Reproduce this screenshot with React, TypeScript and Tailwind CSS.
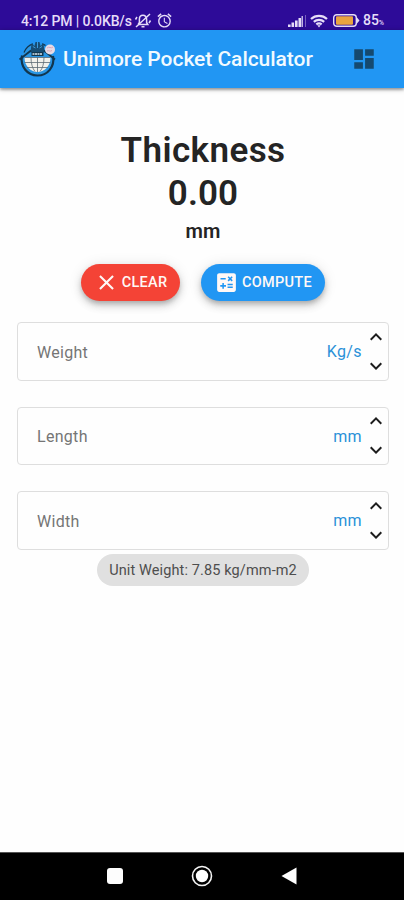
import { useState } from "react";
import {
  MdAlarm,
  MdCalculate,
  MdClose,
  MdDashboard,
  MdKeyboardArrowDown,
  MdKeyboardArrowUp,
} from "react-icons/md";

const FIELDS = [
  { label: "Weight", unit: "Kg/s" },
  { label: "Length", unit: "mm" },
  { label: "Width", unit: "mm" },
];

function StatusBar() {
  return (
    <div className="flex h-[30px] items-center bg-[#2d0b98] pl-[21px] pr-5 pt-[11px] text-[#e6ddf8]">
      <span className="w-[111px] whitespace-nowrap text-[14px] font-medium leading-5 tracking-[-0.12px]">
        4:12 PM | 0.0KB/s
      </span>
      <svg className="ml-[2px] h-[17px] w-[18px]" viewBox="0 0 18 17" fill="none" stroke="currentColor" strokeWidth="1.5">
        <path d="M4.5 12.5h9.3l-1.200-2V7.200C12.600 4.900 11 3.300 9 3.300S5.400 4.900 5.400 7.200v3.300l-1.200 2" />
        <path d="M7.500 14.800h3M2 15 16 2M1.500 7.500 3 5M16.500 8.500 15 11" />
      </svg>
      <MdAlarm className="ml-1 size-[17px]" />
      <div className="flex-1" />
      <svg className="h-3 w-[18px]" viewBox="0 0 18 12" fill="currentColor">
        <path d="M0 9.500h2.600V12H0zM3.500 7.500h2.600V12H3.500zM7 5.500h2.600V12H7zM10.500 3h2.600v9h-2.600z" />
        <path d="M13.600 1h1.200v11h-1.200z" />
        <path d="M17 0h.8v12H17z" opacity=".5" />
      </svg>
      <svg className="ml-1 h-[14px] w-[18px]" viewBox="0 0 18 14" fill="none" stroke="currentColor" strokeWidth="2.200">
        <path d="M1 5c4.500-4.200 11.500-4.200 16 0M3.800 7.900c3-2.600 7.400-2.600 10.400 0M6.300 10.400c1.700-1.300 3.700-1.300 5.400 0" />
        <path d="M7.300 11.300 9 13.600l1.700-2.300z" fill="currentColor" stroke="none" />
      </svg>
      <svg className="ml-[5px] h-[13px] w-[27px]" viewBox="0 0 27 13">
        <rect x=".7" y=".7" width="22.600" height="11.600" rx="3" fill="none" stroke="currentColor" strokeWidth="1.400" />
        <rect x="3" y="2.200" width="17" height="8.600" rx="1" fill="#e9a340" />
        <path d="M24 3.500 26.500 6.500 24 9.500z" fill="currentColor" />
      </svg>
      <span className="ml-[3px] flex items-baseline pt-[2px] text-[14px] font-medium leading-5">
        85<span className="text-[7px]">%</span>
      </span>
    </div>
  );
}

function Logo() {
  return (
    <svg className="size-10" viewBox="0 0 40 40">
      <circle cx="19.500" cy="20.500" r="16" fill="#2a96e4" />
      <path d="M4 16.500C2 28 9.500 36.500 19.500 36.500S37 28 35 17" fill="none" stroke="#12364f" strokeWidth="2.200" />
      <path d="M6 13.500C8 8.500 11.500 5.800 15 4.800M24 4.800c1.500.4 2.500.9 3.500 1.700" fill="none" stroke="#12364f" strokeWidth="1.200" />
      <path d="M12.500 13.500 13.500 4.500l3 2.500 1-4h4l1 4 3-2.500 1 9z" fill="#174d73" />
      <path d="M14.800 7.500 17.500 9M24 7.500 21.500 9M19.500 3v6" stroke="#3d9bdb" strokeWidth="1" />
      <path d="M1.500 20.500 13 11.500M26 11.500l11 9" stroke="#12364f" strokeWidth="1.800" />
      <path d="M6.500 18.500h26c0 8-5.500 14.500-13 14.500s-13-6.500-13-14.500z" fill="#f3f1eb" />
      <path
        d="M6.500 23.500h26M9 28.500h21M19.500 18v15M13 18.500c0 6 1.500 11 4 14M26 18.500c0 6-1.500 11-4 14M6.500 18.500h26"
        fill="none"
        stroke="#5d6b73"
        strokeWidth=".8"
      />
      <path d="M13.500 13h12v4h-12z" fill="#12364f" />
      <path d="M14.500 15h10" stroke="#dce8ef" strokeWidth="1.600" strokeDasharray="2 .5" />
      <circle cx="32" cy="10.500" r="5" fill="#e6dce6" />
      <path d="M29 9c2-2 4 1 6-1M29 12c2-1 3 1 5-.5" fill="none" stroke="#dfa6b8" strokeWidth="1" />
    </svg>
  );
}

function AppHeader() {
  return (
    <header className="flex h-[58px] items-center bg-[#2196f3] pl-[18px] pr-[27px] shadow-[0_1px_5px_rgba(0,0,0,0.35),0_2px_2px_rgba(0,0,0,0.2)]">
      <Logo />
      <h1 className="ml-[5px] flex-1 whitespace-nowrap pt-px text-[21px] font-medium tracking-[-0.04px] text-[#f2faff]">
        Unimore Pocket Calculator
      </h1>
      <button aria-label="Dashboard">
        <MdDashboard className="size-[26px] text-[#15496f]" />
      </button>
    </header>
  );
}

function NumberField({ label, unit }: { label: string; unit: string }) {
  const [value, setValue] = useState("");

  function step(amount: number) {
    setValue(String(Number(value || 0) + amount));
  }

  return (
    <div className="flex h-[58.5px] items-center rounded-[4px] border-[1.5px] border-[#dedede] pl-[19px]">
      <input
        value={value}
        onChange={(e) => setValue(e.target.value)}
        placeholder={label}
        className="w-0 flex-1 pt-[3px] text-base tracking-[0.3px] text-[#1d1d1d] outline-none placeholder:text-[#757575]"
      />
      <span className="pt-[2px] text-base tracking-[0.4px] text-[#2a91d8]">{unit}</span>
      <div className="ml-[2px] flex flex-col gap-[5px] text-[#1d1d1d]">
        <button onClick={() => step(1)} aria-label="Increase">
          <MdKeyboardArrowUp className="size-6" />
        </button>
        <button onClick={() => step(-1)} aria-label="Decrease">
          <MdKeyboardArrowDown className="size-6" />
        </button>
      </div>
    </div>
  );
}

function NavBar() {
  return (
    <nav className="flex h-12 items-center justify-between border-t border-[#555] bg-black px-[107px] pb-px text-white">
      <div className="size-4 rounded-[3px] bg-[#fdfdfd]" />
      <svg className="size-[22px]" viewBox="0 0 22 22">
        <circle cx="11" cy="11" r="9.500" fill="none" stroke="#f4f4f4" strokeWidth="1.600" />
        <circle cx="11" cy="11" r="6.200" fill="#fff" />
      </svg>
      <svg className="h-[18px] w-[16px]" viewBox="0 0 16 18">
        <path d="M.5 9 15.500.500v17z" fill="#fff" />
      </svg>
    </nav>
  );
}

export default function App() {
  return (
    <div className="flex h-[900px] w-[404px] flex-col bg-[#fefefe] font-[Roboto,sans-serif]">
      <StatusBar />
      <AppHeader />

      <main className="flex flex-1 flex-col pl-[17px] pr-[15px] pt-[41px]">
        <div className="text-center font-semibold text-[#242424]">
          <h2 className="text-[35px] leading-[43px] tracking-[0.4px]">Thickness</h2>
          <p className="text-[35px] leading-[43px] tracking-[0.1px]">0.00</p>
          <p className="text-xl leading-8 tracking-[0.2px]">mm</p>
        </div>

        <div className="mt-[17px] flex h-[37px] justify-center gap-[21px] text-[14.5px] font-medium text-[#fff8f6]">
          <button className="flex w-[99px] items-center justify-center gap-[3px] rounded-full bg-[#f44336] tracking-[0.3px] shadow-[0_3px_5px_-1px_rgba(0,0,0,0.2),0_5px_8px_rgba(0,0,0,0.14),0_1px_14px_rgba(0,0,0,0.1)]">
            <MdClose className="size-[25px]" />
            CLEAR
          </button>
          <button className="flex w-[124px] items-center justify-center gap-[3px] rounded-full bg-[#2196f3] tracking-[0.3px] shadow-[0_3px_5px_-1px_rgba(0,0,0,0.2),0_5px_8px_rgba(0,0,0,0.14),0_1px_14px_rgba(0,0,0,0.1)]">
            <MdCalculate className="size-[25px]" />
            COMPUTE
          </button>
        </div>

        <div className="mt-[21px] flex flex-col gap-[26px]">
          {FIELDS.map((field) => (
            <NumberField key={field.label} label={field.label} unit={field.unit} />
          ))}
        </div>

        <div className="mt-1 flex h-8 w-[212px] items-center justify-center self-center rounded-full bg-[#e0e0e0] pt-[2px] text-[14.5px] tracking-[0.12px] text-[#4e4e4e]">
          Unit Weight: 7.85 kg/mm-m2
        </div>
      </main>

      <NavBar />
    </div>
  );
}
